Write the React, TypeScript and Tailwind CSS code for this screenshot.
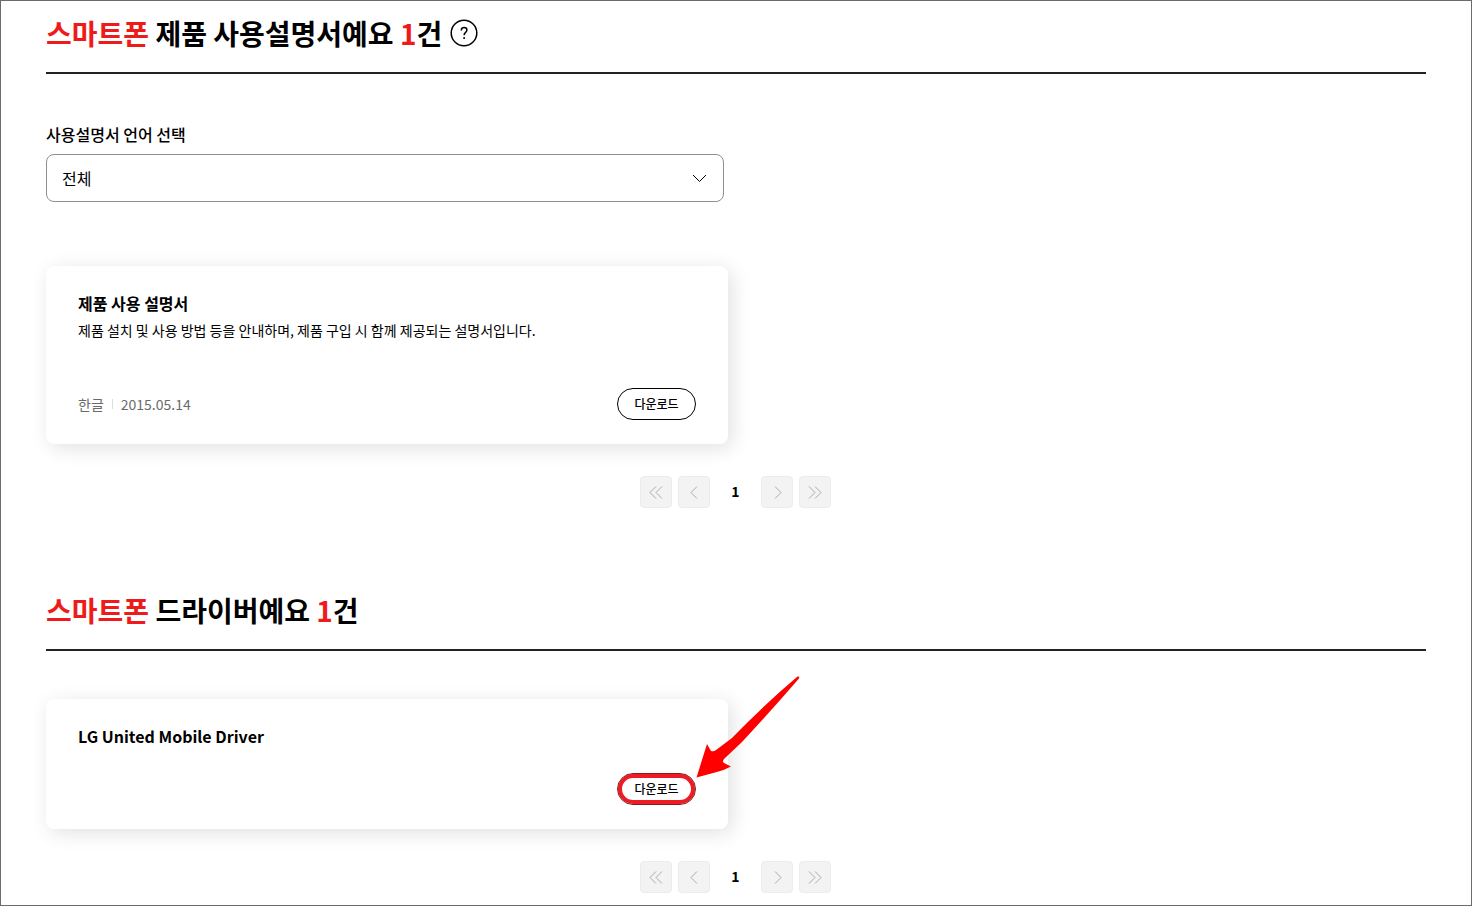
import { useState, type ReactNode } from "react"

interface SectionTitleProps {
  label: string
  count: number
  children?: ReactNode
}

function SectionTitle({ label, count, children }: SectionTitleProps) {
  return (
    <div className="flex items-center gap-2 border-b-2 border-[#222222] pt-3 pb-[19px]">
      <h2 className="text-[28px] leading-10 font-bold text-black">
        <span className="text-[#ee1b1b]">스마트폰</span> {label} <span className="text-[#ee1b1b]">{count}</span>건
      </h2>
      {children}
    </div>
  )
}

function HelpButton() {
  return (
    <button type="button" aria-label="도움말" className="cursor-pointer">
      <svg width="28" height="28" viewBox="0 0 28 28" fill="none" stroke="#000" strokeWidth="1.5">
        <circle cx="14" cy="14" r="12.8" />
        <path d="M11.3 11.4c0-1.8 1.1-2.8 2.8-2.8s2.8 1 2.8 2.5c0 1.2-.7 1.8-1.5 2.5-.8.7-1.3 1.2-1.3 2.6" />
        <circle cx="14.1" cy="19" r="1" fill="#000" stroke="none" />
      </svg>
    </button>
  )
}

function DownloadButton({ highlighted = false }: { highlighted?: boolean }) {
  return (
    <button
      type="button"
      className={`h-8 w-[79px] cursor-pointer rounded-full border text-xs font-medium text-black ${
        highlighted ? "border-[#8a1a1e] inset-ring-4 inset-ring-[#ed1c24]" : "border-black"
      }`}
    >
      다운로드
    </button>
  )
}

function Arrow() {
  return (
    <svg
      className="pointer-events-none absolute bottom-[27px] left-full"
      width="104"
      height="102"
      viewBox="0 0 104 102"
      fill="#ff0000"
      aria-hidden="true"
    >
      <path d="M0.500 101.500 L11 68 L15 75 Q17.500 76 20 74 L36 62 Q69 28 101.500 0.500 Q104 0 103 2.500 Q74 36 46 66 L28 83 Q26 85.500 28 87 L35 90.500 Q27 95 19 96.500 Z" />
    </svg>
  )
}

const pageIcons = {
  first: "M11 5.5L5 11.5L11 17.5 M17 5.5L11 11.5L17 17.5",
  prev: "M14 5.5L8 11.5L14 17.5",
  next: "M9 5.5L15 11.5L9 17.5",
  last: "M5 5.5L11 11.5L5 17.5 M11 5.5L17 11.5L11 17.5",
}

function PageButton({ icon, label }: { icon: keyof typeof pageIcons; label: string }) {
  return (
    <button
      type="button"
      disabled
      aria-label={label}
      className="flex size-8 items-center justify-center rounded border border-[#ececec] bg-[#f3f3f3]"
    >
      <svg width="22" height="22" viewBox="0 0 22 22" fill="none" stroke="#aaaaaa" strokeWidth="1">
        <path d={pageIcons[icon]} />
      </svg>
    </button>
  )
}

function Pagination() {
  return (
    <nav aria-label="페이지" className="mt-8 flex items-center justify-center gap-1.5 pr-px">
      <PageButton icon="first" label="처음" />
      <PageButton icon="prev" label="이전" />
      <button type="button" aria-current="page" className="h-8 w-[39px] pb-0.5 text-sm font-bold text-black">
        1
      </button>
      <PageButton icon="next" label="다음" />
      <PageButton icon="last" label="마지막" />
    </nav>
  )
}

interface FileCardProps {
  title: string
  description?: string
  footer?: ReactNode
  children: ReactNode
}

function FileCard({ title, description, footer, children }: FileCardProps) {
  return (
    <article className="rounded-lg bg-white px-8 pt-[25px] pb-6 shadow-[4px_4px_20px_rgba(0,0,0,0.12)]">
      <h3 className="text-base leading-6 font-bold text-black">{title}</h3>
      {description && <p className="mt-[5px] text-sm leading-5 text-black">{description}</p>}
      <div className={`flex items-center justify-between ${description ? "mt-12" : "mt-[25px]"}`}>
        <div className="text-sm leading-5 text-[#6b6b6b]">{footer}</div>
        <div className="relative flex">{children}</div>
      </div>
    </article>
  )
}

export default function App() {
  const [language, setLanguage] = useState("all")

  return (
    <main className="min-h-screen border border-[#6b6b6f] bg-white px-[45px] pb-3 font-['Noto_Sans_CJK_KR',sans-serif]">
      <section>
        <SectionTitle label="제품 사용설명서예요" count={1}>
          <HelpButton />
        </SectionTitle>

        {/* Language filter */}
        <div className="mt-12 grid grid-cols-2 gap-6">
          <div>
            <label htmlFor="language" className="block text-base leading-6 font-medium text-black">
              사용설명서 언어 선택
            </label>
            <div className="relative mt-2">
              <select
                id="language"
                value={language}
                onChange={(e) => setLanguage(e.target.value)}
                className="h-12 w-full appearance-none rounded-lg border border-[#8f8f8f] bg-white px-[15px] text-base text-black"
              >
                <option value="all">전체</option>
                <option value="ko">한글</option>
              </select>
              <svg
                className="pointer-events-none absolute top-4 right-4"
                width="16"
                height="16"
                viewBox="0 0 16 16"
                fill="none"
                stroke="#000"
                strokeWidth="1"
              >
                <path d="M1 5L7.500 11.500L14 5" />
              </svg>
            </div>
          </div>
        </div>

        <div className="mt-16 grid grid-cols-2 gap-4">
          <FileCard
            title="제품 사용 설명서"
            description="제품 설치 및 사용 방법 등을 안내하며, 제품 구입 시 함께 제공되는 설명서입니다."
            footer={
              <div className="flex items-center gap-2">
                <span>한글</span>
                <span className="h-2.5 w-px bg-[#dddddd]" />
                <span>2015.05.14</span>
              </div>
            }
          >
            <DownloadButton />
          </FileCard>
        </div>
        <Pagination />
      </section>

      <section className="mt-[70px]">
        <SectionTitle label="드라이버예요" count={1} />
        <div className="mt-12 grid grid-cols-2 gap-4">
          <FileCard title="LG United Mobile Driver">
            <DownloadButton highlighted />
            <Arrow />
          </FileCard>
        </div>
        <Pagination />
      </section>
    </main>
  )
}
